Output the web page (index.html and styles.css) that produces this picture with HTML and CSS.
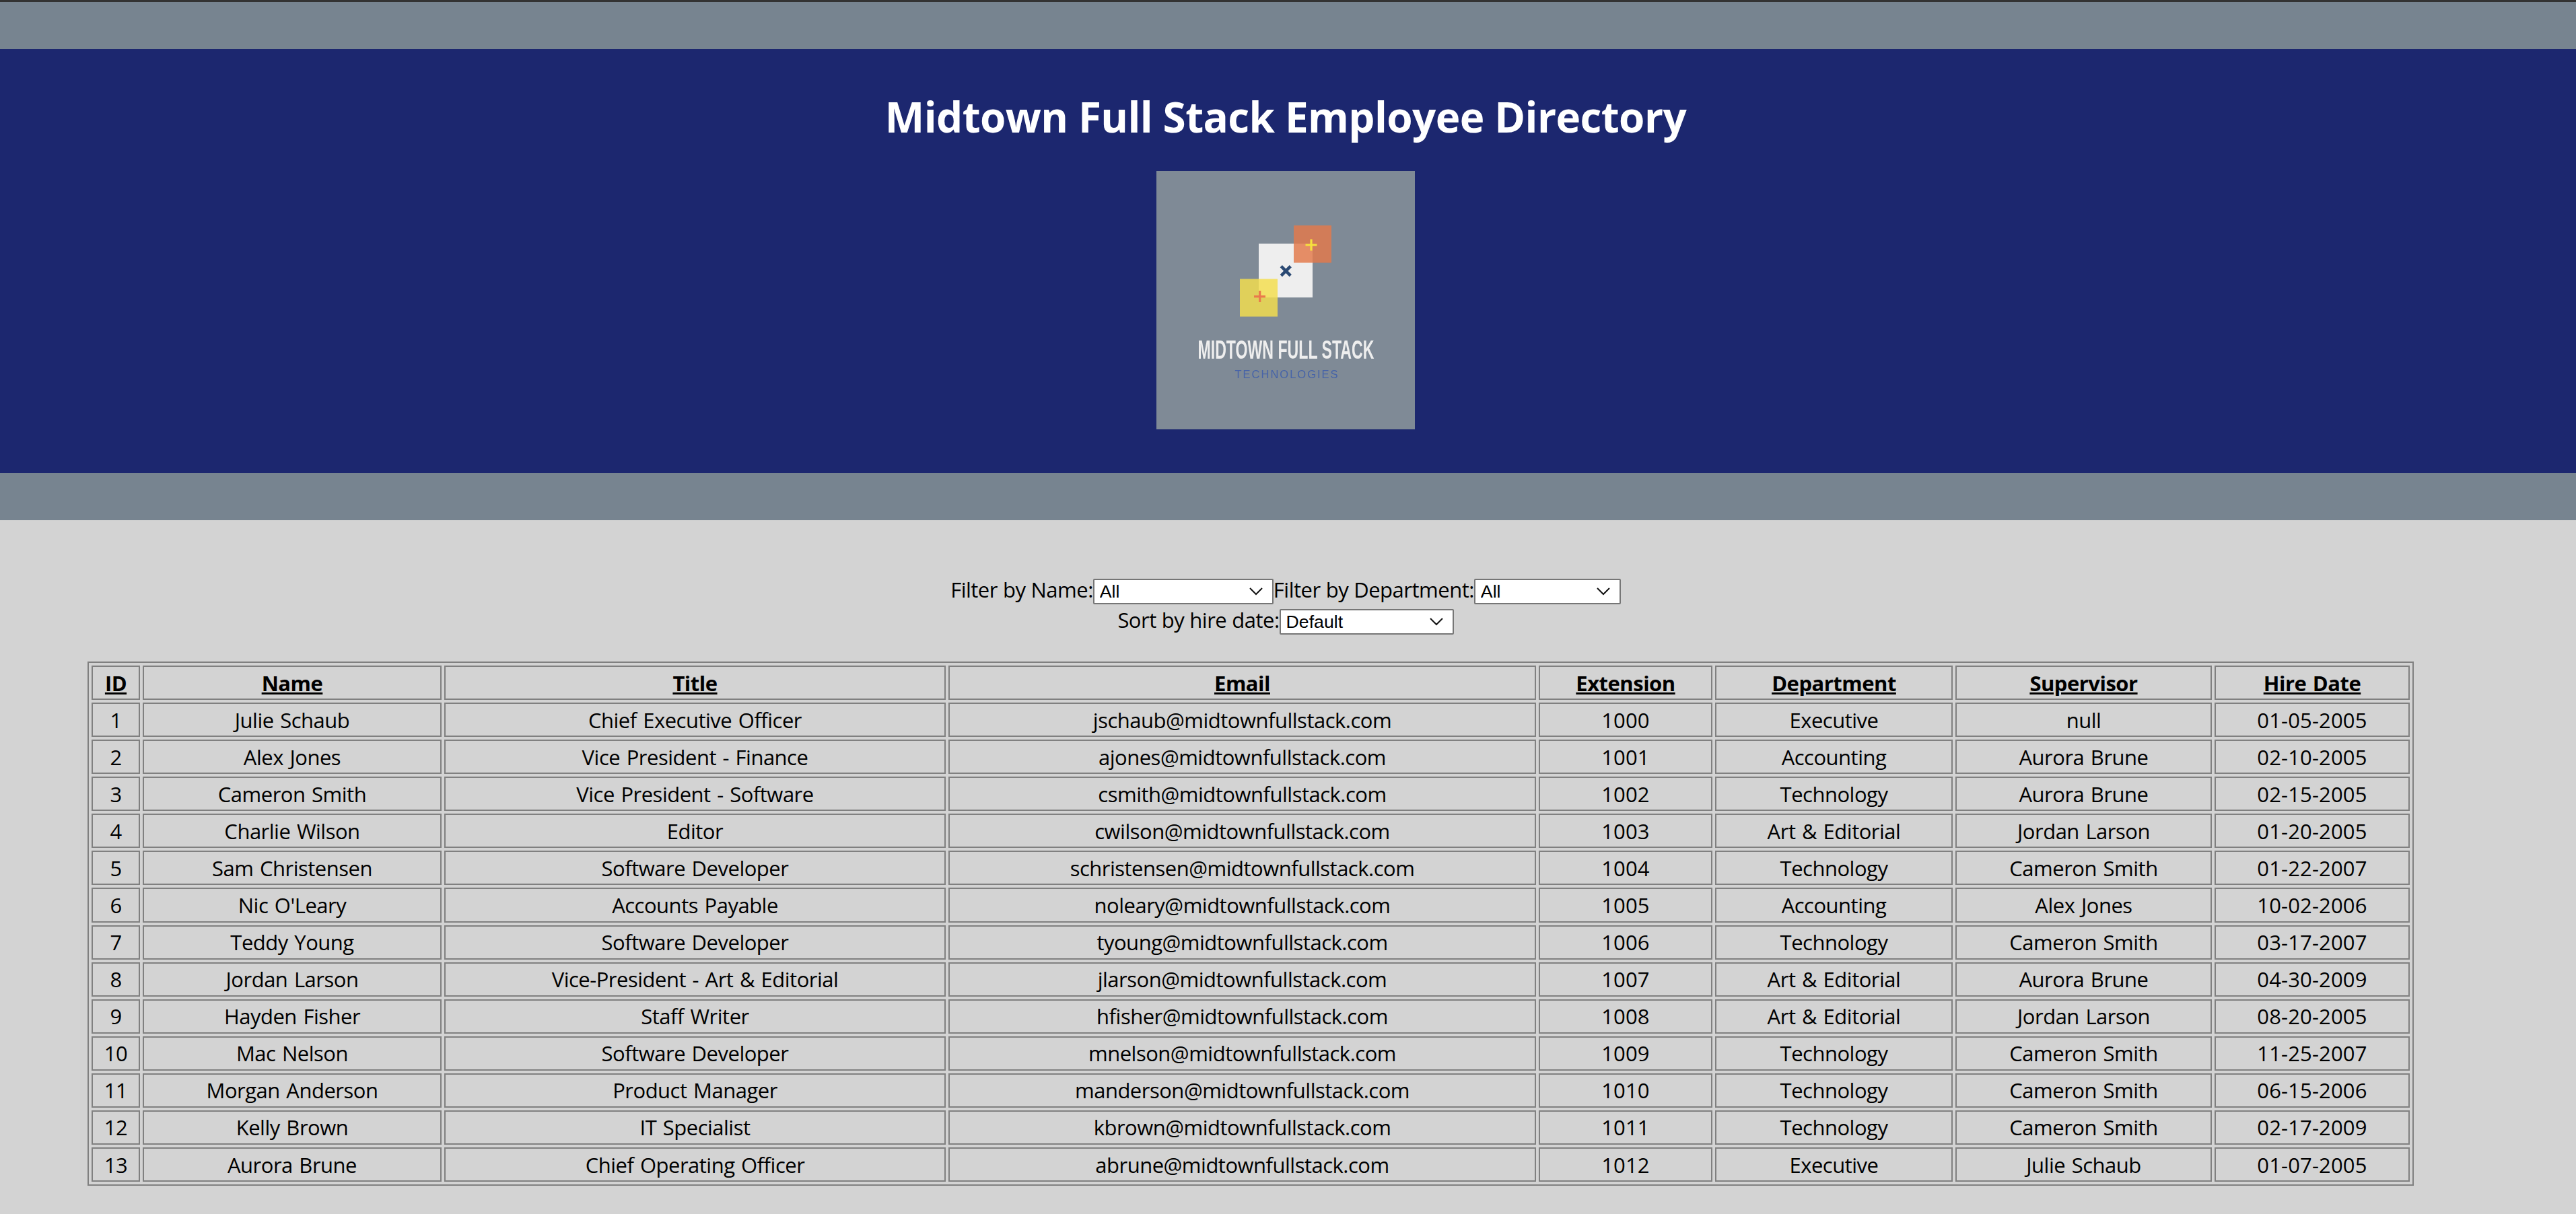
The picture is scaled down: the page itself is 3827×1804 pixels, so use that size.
FILE: index.html
```html
<!DOCTYPE html>
<html lang="en">
<head>
<meta charset="utf-8">
<title>Midtown Full Stack Employee Directory</title>
<link rel="stylesheet" href="styles.css">
</head>
<body>
<header class="masthead">
  <div class="band">
    <h1 class="title">Midtown Full Stack Employee Directory</h1>
    <svg class="logo" viewBox="0 0 384 384" width="384" height="384" role="img" aria-label="Midtown Full Stack Technologies logo">
      <defs><filter id="soft" x="-5%" y="-5%" width="110%" height="110%"><feGaussianBlur stdDeviation="0.6"/></filter></defs>
      <rect class="logo-bg" width="384" height="384"/>
      <g filter="url(#soft)">
        <rect class="sq-white" x="152" y="108" width="80" height="80"/>
        <rect class="sq-orange" x="204" y="81" width="56" height="55.5"/>
        <rect class="sq-yellow" x="124" y="160.500" width="56" height="56"/>
        <path class="plus-yellow" d="M230 101.500v17M221.500 110h17"/>
        <path class="plus-orange" d="M153.700 178v17M145 186.700h17"/>
        <path class="cross-navy" d="M185.300 141.700l14 14M199.300 141.700l-14 14"/>
        <text class="logo-name" transform="translate(61.500 279) scale(.593 1)">MIDTOWN FULL STACK</text>
        <text class="logo-sub" x="116.500" y="308">TECHNOLOGIES</text>
      </g>
    </svg>
  </div>
</header>
<main class="content">
  <form class="filters">
    <div class="filter-line"><label>Filter by Name:<select class="pick pick-name"><option>All</option></select></label><label>Filter by Department:<select class="pick pick-dept"><option>All</option></select></label></div>
    <div class="filter-line"><label>Sort by hire date:<select class="pick pick-sort"><option>Default</option></select></label></div>
  </form>
  <table class="directory">
    <colgroup>
      <col class="c-id"><col class="c-name"><col class="c-title"><col class="c-email"><col class="c-ext"><col class="c-dept"><col class="c-sup"><col class="c-hire">
    </colgroup>
    <thead>
      <tr><th>ID</th><th>Name</th><th>Title</th><th>Email</th><th>Extension</th><th>Department</th><th>Supervisor</th><th>Hire Date</th></tr>
    </thead>
    <tbody>
      <tr><td>1</td><td>Julie Schaub</td><td>Chief Executive Officer</td><td>jschaub@midtownfullstack.com</td><td>1000</td><td>Executive</td><td>null</td><td>01-05-2005</td></tr>
      <tr><td>2</td><td>Alex Jones</td><td>Vice President - Finance</td><td>ajones@midtownfullstack.com</td><td>1001</td><td>Accounting</td><td>Aurora Brune</td><td>02-10-2005</td></tr>
      <tr><td>3</td><td>Cameron Smith</td><td>Vice President - Software</td><td>csmith@midtownfullstack.com</td><td>1002</td><td>Technology</td><td>Aurora Brune</td><td>02-15-2005</td></tr>
      <tr><td>4</td><td>Charlie Wilson</td><td>Editor</td><td>cwilson@midtownfullstack.com</td><td>1003</td><td>Art &amp; Editorial</td><td>Jordan Larson</td><td>01-20-2005</td></tr>
      <tr><td>5</td><td>Sam Christensen</td><td>Software Developer</td><td>schristensen@midtownfullstack.com</td><td>1004</td><td>Technology</td><td>Cameron Smith</td><td>01-22-2007</td></tr>
      <tr><td>6</td><td>Nic O'Leary</td><td>Accounts Payable</td><td>noleary@midtownfullstack.com</td><td>1005</td><td>Accounting</td><td>Alex Jones</td><td>10-02-2006</td></tr>
      <tr><td>7</td><td>Teddy Young</td><td>Software Developer</td><td>tyoung@midtownfullstack.com</td><td>1006</td><td>Technology</td><td>Cameron Smith</td><td>03-17-2007</td></tr>
      <tr><td>8</td><td>Jordan Larson</td><td>Vice-President - Art &amp; Editorial</td><td>jlarson@midtownfullstack.com</td><td>1007</td><td>Art &amp; Editorial</td><td>Aurora Brune</td><td>04-30-2009</td></tr>
      <tr><td>9</td><td>Hayden Fisher</td><td>Staff Writer</td><td>hfisher@midtownfullstack.com</td><td>1008</td><td>Art &amp; Editorial</td><td>Jordan Larson</td><td>08-20-2005</td></tr>
      <tr><td>10</td><td>Mac Nelson</td><td>Software Developer</td><td>mnelson@midtownfullstack.com</td><td>1009</td><td>Technology</td><td>Cameron Smith</td><td>11-25-2007</td></tr>
      <tr><td>11</td><td>Morgan Anderson</td><td>Product Manager</td><td>manderson@midtownfullstack.com</td><td>1010</td><td>Technology</td><td>Cameron Smith</td><td>06-15-2006</td></tr>
      <tr><td>12</td><td>Kelly Brown</td><td>IT Specialist</td><td>kbrown@midtownfullstack.com</td><td>1011</td><td>Technology</td><td>Cameron Smith</td><td>02-17-2009</td></tr>
      <tr><td>13</td><td>Aurora Brune</td><td>Chief Operating Officer</td><td>abrune@midtownfullstack.com</td><td>1012</td><td>Executive</td><td>Julie Schaub</td><td>01-07-2005</td></tr>
    </tbody>
  </table>
</main>
</body>
</html>
```
FILE: styles.css
```css
html, body { margin: 0; padding: 0; }
body {
  min-height: 1804px;
  background: #d3d3d3;
  color: #000;
  font-family: "Open Sans", "Noto Sans", sans-serif;
  font-size: 31px;
  letter-spacing: -0.5px;
  word-spacing: 2px;
}
.masthead {
  border-top: 3px solid #333;
  background: #778490;
  padding: 70px 0;
}
.band {
  height: 630px;
  background: #1c276f;
  display: flex;
  flex-direction: column;
  align-items: center;
  padding: 61px 7px 0 0;
  box-sizing: border-box;
}
.title {
  margin: 0 0 42px;
  color: #fff;
  font-size: 62px;
  line-height: 78px;
  font-weight: 700;
  letter-spacing: -0.6px;
  word-spacing: 0;
}
.logo { display: block; }
.logo-bg { fill: #7f8a96; }
.sq-white { fill: #eee; }
.sq-orange { fill: #e3794b; fill-opacity: .83; }
.sq-yellow { fill: #f4de4e; fill-opacity: .83; }
.plus-yellow, .plus-orange, .cross-navy { fill: none; }
.plus-yellow { stroke: #f6e03c; stroke-width: 3.2; }
.plus-orange { stroke: #ea7a4c; stroke-width: 3.2; }
.cross-navy { stroke: #2c4a73; stroke-width: 4.6; }
.logo-name {
  font-family: "Liberation Sans", sans-serif;
  font-weight: 700;
  font-size: 39px;
  letter-spacing: 0;
  word-spacing: 0;
  fill: #eee;
}
.logo-sub {
  font-family: "Liberation Sans", sans-serif;
  font-size: 16.500px;
  letter-spacing: 2px;
  word-spacing: 0;
  fill: #4664a8;
}
.content { padding-top: 81px; }
.filters {
  width: 3820px;
  text-align: center;
  word-spacing: .5px;
}
.filter-line { height: 45px; line-height: 45px; }
.pick {
  appearance: none;
  height: 38px;
  margin: 0;
  padding: 0 0 0 8px;
  box-sizing: border-box;
  vertical-align: baseline;
  border: 2px solid #767676;
  border-radius: 2px;
  background: #fff url("data:image/svg+xml,%3Csvg xmlns='http://www.w3.org/2000/svg' width='20' height='12'%3E%3Cpath d='M1 1l9 9 9-9' fill='none' stroke='%23111' stroke-width='2'/%3E%3C/svg%3E") no-repeat right 14px center;
  font-family: "Liberation Sans", Arial, sans-serif;
  font-size: 26.670px;
  letter-spacing: 0;
  word-spacing: 0;
  color: #000;
}
.pick-name { width: 268px; }
.pick-dept { width: 218px; }
.pick-sort { width: 259px; }
.directory {
  table-layout: fixed;
  width: 3456px;
  margin: 39px 0 0 130px;
  border: 2px solid #808080;
  border-spacing: 4px;
  box-sizing: border-box;
}
.c-id { width: 72px; }
.c-name { width: 444px; }
.c-title { width: 745px; }
.c-email { width: 873px; }
.c-ext { width: 258px; }
.c-dept { width: 353px; }
.c-sup { width: 381px; }
.c-hire { width: 290px; }
.directory th, .directory td {
  height: 51.080px;
  padding: 0;
  box-sizing: border-box;
  border: 2px solid #808080;
  text-align: center;
  font-weight: 400;
}
.directory td:nth-child(5), .directory td:nth-child(8) { letter-spacing: .15px; }
.directory th { font-weight: 700; text-decoration: underline; }
```
